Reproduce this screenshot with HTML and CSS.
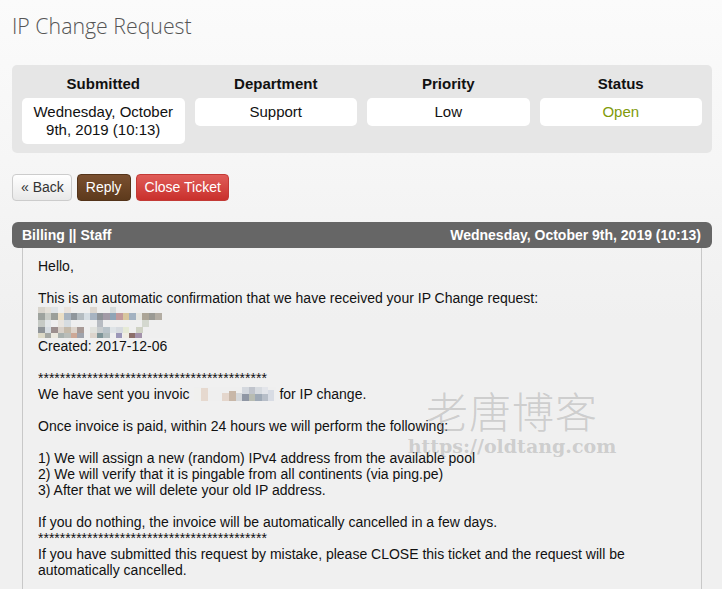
FILE: index.html
```html
<!DOCTYPE html>
<html lang="en">
<head>
  <meta charset="UTF-8">
  <meta name="viewport" content="width=device-width, initial-scale=1.0">
  <title>IP Change Request</title>
  <link rel="stylesheet" href="styles.css">
</head>
<body>
  <div class="page">
    <h1 class="title">IP Change Request</h1>

    <div class="ticket-info">
      <div class="info-col">
        <h4>Submitted</h4>
        <div class="info-box">Wednesday, October 9th, 2019 (10:13)</div>
      </div>
      <div class="info-col">
        <h4>Department</h4>
        <div class="info-box">Support</div>
      </div>
      <div class="info-col">
        <h4>Priority</h4>
        <div class="info-box">Low</div>
      </div>
      <div class="info-col">
        <h4>Status</h4>
        <div class="info-box status-open">Open</div>
      </div>
    </div>

    <div class="actions">
      <a href="#" class="btn btn-back">&laquo; Back</a>
      <a href="#" class="btn btn-reply">Reply</a>
      <a href="#" class="btn btn-close">Close Ticket</a>
    </div>

    <div class="message">
      <div class="message-head">
        <span>Billing || Staff</span>
        <span>Wednesday, October 9th, 2019 (10:13)</span>
      </div>
      <div class="message-body">
        <p>Hello,</p>
        <br>
        <p>This is an automatic confirmation that we have received your IP Change request:</p>
        <!-- blurred service details -->
        <svg class="mosaic" width="132" height="32" viewBox="0 0 132 32">
          <rect x="0" y="0" width="132" height="32" fill="#efefef"/>
          <rect x="0" y="1" width="7" height="6" fill="#d8d4cc"/>
          <rect x="7" y="1" width="6" height="6" fill="#e4e0d8"/>
          <rect x="13" y="1" width="7" height="6" fill="#dfe3e6"/>
          <rect x="26" y="1" width="7" height="6" fill="#ebe3dc"/>
          <rect x="52" y="1" width="7" height="6" fill="#dcd6cf"/>
          <rect x="72" y="1" width="6" height="6" fill="#d7dcdc"/>
          <rect x="0" y="7" width="7" height="7" fill="#9ea39e"/>
          <rect x="7" y="7" width="6" height="7" fill="#c9ccc6"/>
          <rect x="13" y="7" width="7" height="7" fill="#9b9f9a"/>
          <rect x="20" y="7" width="6" height="7" fill="#ecdfc6"/>
          <rect x="26" y="7" width="7" height="7" fill="#a9b4c0"/>
          <rect x="33" y="7" width="6" height="7" fill="#8f969c"/>
          <rect x="39" y="7" width="7" height="7" fill="#b4bcc1"/>
          <rect x="46" y="7" width="6" height="7" fill="#d5dde3"/>
          <rect x="52" y="7" width="7" height="7" fill="#a7b3c1"/>
          <rect x="59" y="7" width="6" height="7" fill="#8d9297"/>
          <rect x="65" y="7" width="7" height="7" fill="#a29aa6"/>
          <rect x="72" y="7" width="6" height="7" fill="#8fa4b6"/>
          <rect x="78" y="7" width="7" height="7" fill="#c19a9c"/>
          <rect x="85" y="7" width="6" height="7" fill="#d8c69e"/>
          <rect x="91" y="7" width="7" height="7" fill="#a3b2c1"/>
          <rect x="98" y="7" width="6" height="7" fill="#e6e6e0"/>
          <rect x="104" y="7" width="7" height="7" fill="#aca597"/>
          <rect x="111" y="7" width="6" height="7" fill="#9a9a94"/>
          <rect x="117" y="7" width="7" height="7" fill="#b3ada3"/>
          <rect x="0" y="14" width="7" height="7" fill="#c6cac5"/>
          <rect x="7" y="14" width="6" height="7" fill="#e2e6e8"/>
          <rect x="20" y="14" width="6" height="7" fill="#e8e4de"/>
          <rect x="26" y="14" width="7" height="7" fill="#d6dce0"/>
          <rect x="59" y="14" width="6" height="7" fill="#b8bcc2"/>
          <rect x="104" y="14" width="7" height="7" fill="#d4d8cf"/>
          <rect x="0" y="21" width="7" height="6" fill="#8f9498"/>
          <rect x="7" y="21" width="6" height="6" fill="#d7dde2"/>
          <rect x="13" y="21" width="7" height="6" fill="#9c8f8e"/>
          <rect x="20" y="21" width="6" height="6" fill="#d8d0c8"/>
          <rect x="26" y="21" width="7" height="6" fill="#c4b9a9"/>
          <rect x="33" y="21" width="6" height="6" fill="#ddd4cb"/>
          <rect x="39" y="21" width="7" height="6" fill="#a89a96"/>
          <rect x="52" y="21" width="7" height="6" fill="#e1e2dd"/>
          <rect x="59" y="21" width="6" height="6" fill="#c8ccce"/>
          <rect x="65" y="21" width="7" height="6" fill="#b9c3c9"/>
          <rect x="72" y="21" width="6" height="6" fill="#dfe4e7"/>
          <rect x="78" y="21" width="7" height="6" fill="#d7dbe0"/>
          <rect x="85" y="21" width="6" height="6" fill="#e6ead6"/>
          <rect x="98" y="21" width="7" height="6" fill="#cfd2c4"/>
          <rect x="0" y="27" width="7" height="5" fill="#dcd9c7"/>
          <rect x="7" y="27" width="6" height="5" fill="#a5a8a4"/>
          <rect x="13" y="27" width="7" height="5" fill="#ebe8de"/>
          <rect x="20" y="27" width="6" height="5" fill="#a9b1ae"/>
          <rect x="26" y="27" width="7" height="5" fill="#b9bdb9"/>
          <rect x="33" y="27" width="6" height="5" fill="#cda896"/>
          <rect x="39" y="27" width="7" height="5" fill="#9fa3ac"/>
          <rect x="52" y="27" width="7" height="5" fill="#dcd4cc"/>
          <rect x="59" y="27" width="6" height="5" fill="#7f9598"/>
          <rect x="65" y="27" width="7" height="5" fill="#b1bcbd"/>
          <rect x="78" y="27" width="6" height="5" fill="#9b97b8"/>
          <rect x="85" y="27" width="7" height="5" fill="#f0ede2"/>
          <rect x="91" y="27" width="6" height="5" fill="#8c6f6a"/>
          <rect x="97" y="27" width="7" height="5" fill="#a392aa"/>
        </svg>
        <p>Created: 2017-12-06</p>
        <br>
        <p class="stars">******************************************</p>
        <p>We have sent you invoic<svg class="mosaic-inline" width="82" height="14" viewBox="0 0 82 14">
            <rect x="0" y="0" width="82" height="14" fill="#efefef"/>
            <rect x="0" y="1" width="7" height="13" fill="#f0f0ee"/>
            <rect x="7" y="1" width="7" height="13" fill="#e6d9cf"/>
            <rect x="28" y="6" width="7" height="8" fill="#e4d6cc"/>
            <rect x="35" y="4" width="7" height="10" fill="#c8b7a8"/>
            <rect x="42" y="6" width="6" height="8" fill="#d5d8db"/>
            <rect x="48" y="0" width="7" height="7" fill="#d4d8de"/>
            <rect x="48" y="7" width="7" height="7" fill="#9097a4"/>
            <rect x="55" y="0" width="6" height="7" fill="#c0c4cc"/>
            <rect x="55" y="7" width="6" height="7" fill="#b8bcb2"/>
            <rect x="61" y="0" width="7" height="7" fill="#d7dbe0"/>
            <rect x="61" y="7" width="7" height="7" fill="#9ea9b6"/>
            <rect x="68" y="0" width="6" height="7" fill="#e3e5ea"/>
            <rect x="68" y="7" width="6" height="7" fill="#b7bec8"/>
            <rect x="74" y="3" width="6" height="11" fill="#d8dce4"/>
          </svg> for IP change.</p>
        <br>
        <p>Once invoice is paid, within 24 hours we will perform the following:</p>
        <br>
        <p>1) We will assign a new (random) IPv4 address from the available pool</p>
        <p>2) We will verify that it is pingable from all continents (via ping.pe)</p>
        <p>3) After that we will delete your old IP address.</p>
        <br>
        <p>If you do nothing, the invoice will be automatically cancelled in a few days.</p>
        <p class="stars">******************************************</p>
        <p>If you have submitted this request by mistake, please CLOSE this ticket and the request will be automatically cancelled.</p>
      </div>
    </div>

    <div class="watermark">
      <div class="wm-cn">老唐博客</div>
      <div class="wm-url">https://oldtang.com</div>
    </div>
  </div>
</body>
</html>
```

FILE: styles.css
```css
* {
  margin: 0;
  padding: 0;
  box-sizing: border-box;
}

body {
  font-family: "Liberation Sans", Arial, sans-serif;
  font-size: 14px;
  color: #222;
  background: linear-gradient(#fbfbfb 0, #f6f6f6 160px, #f0f0f0 320px, #f0f0f0 100%);
  min-height: 589px;
}

.page {
  position: relative;
  padding: 11px 10px 0 12px;
}

.title {
  font-family: "Open Sans", sans-serif;
  font-weight: 300;
  font-size: 21.3px;
  line-height: 30px;
  color: #555;
  margin-bottom: 24px;
}

/* ticket summary panel */
.ticket-info {
  display: grid;
  grid-template-columns: repeat(4, 1fr);
  column-gap: 10px;
  background-color: #e6e6e6;
  border-radius: 5px;
  padding: 10px 10px 9px 10px;
  margin-bottom: 21px;
}

.info-col h4 {
  font-size: 15px;
  font-weight: bold;
  color: #111;
  text-align: center;
  line-height: 18px;
  margin-bottom: 5px;
}

.info-box {
  background-color: #fff;
  border-radius: 5px;
  text-align: center;
  font-size: 15px;
  line-height: 18px;
  padding: 5px 8px;
  color: #111;
}

.status-open {
  color: #7f9a0b;
}

/* buttons */
.actions {
  display: flex;
  gap: 5px;
  margin-bottom: 21px;
}

.btn {
  display: inline-block;
  font-size: 14px;
  line-height: 17px;
  padding: 4px 8px;
  border: 1px solid transparent;
  border-radius: 4px;
  text-decoration: none;
}

.btn-back {
  color: #333;
  background: linear-gradient(#fff, #e8e8e8);
  border-color: #ccc;
  padding: 4px 7px 4px 8px;
}

.btn-reply {
  color: #fff;
  background: linear-gradient(#7a5030, #5d3a1c);
  border-color: #54341a;
}

.btn-close {
  color: #fff;
  background: linear-gradient(#e05c58, #c9302c);
  border-color: #c33a36;
  padding: 4px 7px 4px 8px;
}

/* message */
.message-head {
  display: flex;
  justify-content: space-between;
  background-color: #666;
  color: #fff;
  font-weight: bold;
  font-size: 14px;
  line-height: 26px;
  padding: 0 11px 0 10px;
  border-radius: 6px;
}

.message-body {
  margin: 0 10px;
  border-left: 1px solid #c8c8c8;
  border-right: 1px solid #c8c8c8;
  padding: 10px 14px 20px 15px;
  line-height: 16px;
  color: #111;
}

.message-body p {
  line-height: 16px;
}

.message-body br {
  display: block;
  content: "";
  height: 16px;
}

.mosaic {
  display: block;
}

.mosaic-inline {
  vertical-align: -2px;
  margin-left: 4px;
}

.stars {
  font-size: 14px;
  height: 16px;
  line-height: 20px;
  overflow: hidden;
}

/* watermark over the message */
.watermark {
  position: absolute;
  left: 405px;
  top: 384px;
  width: 214px;
  text-align: center;
  pointer-events: none;
}

.wm-cn {
  font-family: "Noto Sans CJK SC", sans-serif;
  font-weight: 300;
  font-size: 42px;
  line-height: 52px;
  color: rgba(150, 150, 150, 0.4);
  letter-spacing: 1px;
}

.wm-url {
  font-family: "DejaVu Serif", serif;
  font-weight: bold;
  font-size: 19px;
  line-height: 20px;
  color: rgba(150, 150, 150, 0.4);
}
```
